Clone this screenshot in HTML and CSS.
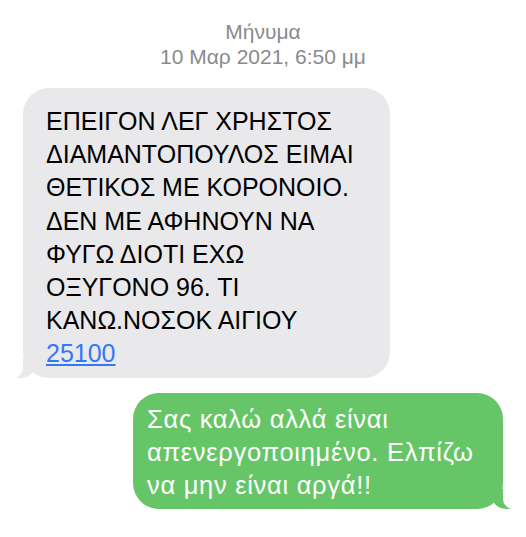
FILE: index.html
```html
<!DOCTYPE html>
<html lang="el">
<head>
<meta charset="utf-8">
<title>Μήνυμα</title>
<link rel="stylesheet" href="styles.css">
</head>
<body>
<div class="screen">
  <header class="meta">
    <div>Μήνυμα</div>
    <div>10 Μαρ 2021, 6:50 μμ</div>
  </header>
  <div class="thread">
    <div class="bubble bubble-in">ΕΠΕΙΓΟΝ ΛΕΓ ΧΡΗΣΤΟΣ<br>ΔΙΑΜΑΝΤΟΠΟΥΛΟΣ ΕΙΜΑΙ<br>ΘΕΤΙΚΟΣ ΜΕ ΚΟΡΟΝΟΙΟ.<br>ΔΕΝ ΜΕ ΑΦΗΝΟΥΝ ΝΑ<br>ΦΥΓΩ ΔΙΟΤΙ ΕΧΩ<br>ΟΞΥΓΟΝΟ 96. ΤΙ<br>ΚΑΝΩ.ΝΟΣΟΚ ΑΙΓΙΟΥ<br><a class="link" href="#">25100</a></div>
    <div class="bubble bubble-out">Σας καλώ αλλά είναι<br>απενεργοποιημένο. Ελπίζω<br>να μην είναι αργά!!</div>
  </div>
</div>
</body>
</html>
```

FILE: styles.css
```css
html, body {
  margin: 0;
  padding: 0;
  background: #ffffff;
}

.screen {
  width: 526px;
  height: 537px;
  overflow: hidden;
  font-family: "Liberation Sans", Arial, sans-serif;
}

.meta {
  padding-top: 19px;
  text-align: center;
  color: #8a8a8e;
  font-size: 21px;
  line-height: 25px;
}

.thread {
  display: flex;
  flex-direction: column;
  gap: 15px;
  margin-top: 19px;
}

.bubble {
  position: relative;
  box-sizing: border-box;
  font-size: 25px;
  line-height: 33.2px;
  border-radius: 26px;
}

.bubble-in {
  align-self: flex-start;
  margin-left: 23px;
  width: 367px;
  padding: 17px 10px 7px 23px;
  background: #e9e9eb;
  color: #000000;
}

.bubble-out {
  align-self: flex-end;
  margin-right: 23px;
  width: 370px;
  padding: 10px 2px 6px 14px;
  background: #66c667;
  color: #ffffff;
  font-size: 25.5px;
  letter-spacing: 0.7px;
  line-height: 33.4px;
  white-space: nowrap;
}

.link {
  color: #3478f6;
  text-decoration: underline;
  text-underline-offset: 2px;
  text-decoration-thickness: 1.5px;
}

.bubble-in::before {
  content: "";
  position: absolute;
  bottom: 0;
  left: -7px;
  width: 20px;
  height: 20px;
  background: #e9e9eb;
  border-bottom-right-radius: 15px;
}

.bubble-in::after {
  content: "";
  position: absolute;
  bottom: 0;
  left: -26px;
  width: 26px;
  height: 20px;
  background: #ffffff;
  border-bottom-right-radius: 10px;
}

.bubble-out::before {
  content: "";
  position: absolute;
  bottom: 0;
  right: -8px;
  width: 20px;
  height: 20px;
  background: #66c667;
  border-bottom-left-radius: 15px;
}

.bubble-out::after {
  content: "";
  position: absolute;
  bottom: 0;
  right: -26px;
  width: 26px;
  height: 20px;
  background: #ffffff;
  border-bottom-left-radius: 10px;
}
```
